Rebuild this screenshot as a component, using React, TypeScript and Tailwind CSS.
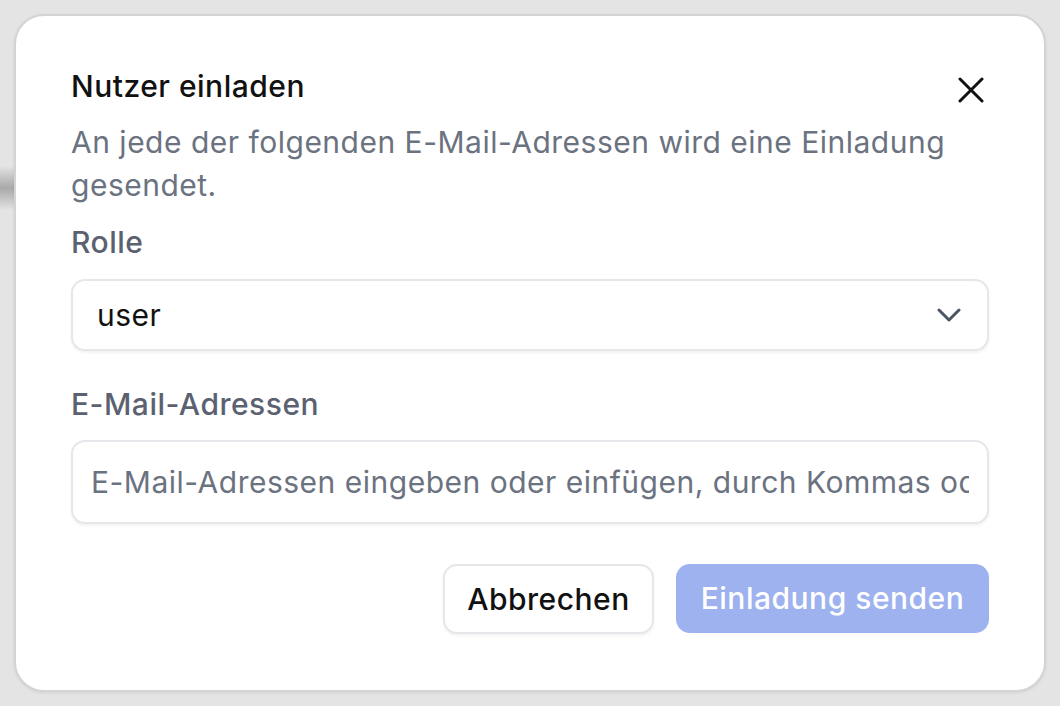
import { useState } from "react";

function CloseIcon() {
  return (
    <svg width="26" height="26" viewBox="0 0 26 26" fill="none" stroke="#111" strokeWidth="3" strokeLinecap="round">
      <path d="M2 2L24 24M24 2L2 24" />
    </svg>
  );
}

function Chevron() {
  return (
    <svg width="24" height="14" viewBox="0 0 24 14" fill="none" stroke="#4b5563" strokeWidth="3" strokeLinecap="round" strokeLinejoin="round">
      <path d="M2 2L12 12L22 2" />
    </svg>
  );
}

export default function App() {
  const [emails, setEmails] = useState("");

  return (
    <div
      className="relative w-[1060px] h-[706px] bg-[#e4e4e4] p-[14px] overflow-hidden"
      style={{ fontFamily: "Inter, 'Noto Sans', sans-serif" }}
    >
      {/* backdrop smudge on the far left */}
      <div className="absolute left-0 top-[166px] h-[44px] w-[14px] bg-gradient-to-b from-[#e4e4e4] via-[#a9a9a9] to-[#e4e4e4]" />

      <div className="relative h-[678px] rounded-[30px] border-2 border-[#d4d4d4] bg-white px-[55px] pt-[52px] shadow-[0_1px_3px_rgba(0,0,0,0.08)]">
        <div className="flex items-center justify-between h-[36px]">
          <h2 className="text-[30px] font-medium text-[#111] tracking-[0.5px]">Nutzer einladen</h2>
          <button className="mr-[5px] mt-[8px] flex items-center justify-center" aria-label="Schließen">
            <CloseIcon />
          </button>
        </div>

        <p className="mt-[17px] text-[30px] leading-[43px] text-[#6b7280] tracking-[0.5px]">
          An jede der folgenden E-Mail-Adressen wird eine Einladung gesendet.
        </p>

        <label className="mt-[17px] block h-[36px] text-[30px] leading-[36px] font-medium text-[#5b6170] tracking-[0.5px]">Rolle</label>

        <div className="mt-[19px] flex h-[72px] items-center justify-between rounded-[14px] border-2 border-[#e5e7eb] bg-white pl-[24px] pr-[26px] shadow-[0_2px_3px_rgba(0,0,0,0.05)]">
          <span className="text-[30px] text-[#111] tracking-[0.5px]">user</span>
          <Chevron />
        </div>

        <label className="mt-[35px] block h-[36px] text-[30px] leading-[36px] font-medium text-[#5b6170] tracking-[0.5px]">E-Mail-Adressen</label>

        <div className="mt-[18px] flex h-[84px] items-center rounded-[14px] border-2 border-[#e5e7eb] bg-white px-[18px] shadow-[0_2px_3px_rgba(0,0,0,0.05)]">
          <input
            value={emails}
            onChange={(e) => setEmails(e.target.value)}
            placeholder="E-Mail-Adressen eingeben oder einfügen, durch Kommas oder Leerzeichen getrennt"
            className="w-full bg-transparent text-[30px] text-[#111] outline-none placeholder:text-[#6b7280] tracking-[0.5px]"
          />
        </div>

        <div className="mt-[40px] flex justify-end gap-[22px]">
          <button className="h-[70px] w-[211px] rounded-[14px] border-2 border-[#e5e7eb] bg-white text-[30px] font-medium text-[#111] tracking-[0.5px] shadow-[0_2px_3px_rgba(0,0,0,0.05)]">
            Abbrechen
          </button>
          <button disabled className="h-[69px] w-[313px] rounded-[14px] bg-[#9db2ee] text-[30px] font-medium text-white tracking-[0.5px]">
            Einladung senden
          </button>
        </div>
      </div>
    </div>
  );
}
